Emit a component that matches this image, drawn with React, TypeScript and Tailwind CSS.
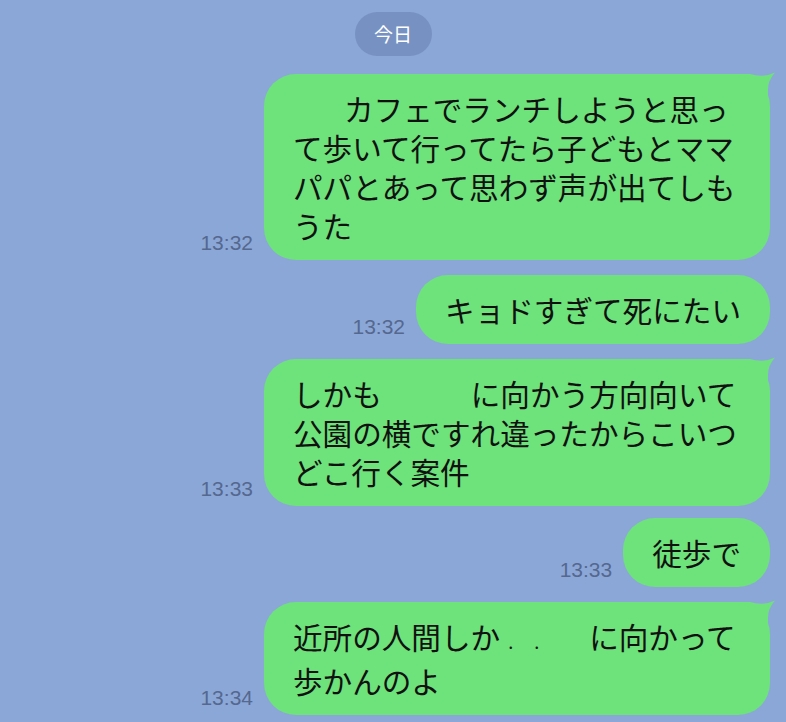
const messages = [
  {
    time: "13:32",
    tail: true,
    multi: true,
    mt: "mt-[18px]",
    lines: [
      <>
        <span className="inline-block w-[51px]" />
        カフェでランチしようと思っ
      </>,
      <>て歩いて行ってたら子どもとママ</>,
      <>パパとあって思わず声が出てしも</>,
      <>うた</>,
    ],
  },
  {
    time: "13:32",
    tail: false,
    multi: false,
    mt: "mt-[15px]",
    lines: [<>キョドすぎて死にたい</>],
  },
  {
    time: "13:33",
    tail: true,
    multi: true,
    mt: "mt-[15px]",
    lines: [
      <>
        しかも
        <span className="inline-block w-[89px]" />
        に向かう方向向いて
      </>,
      <>公園の横ですれ違ったからこいつ</>,
      <>どこ行く案件</>,
    ],
  },
  {
    time: "13:33",
    tail: false,
    multi: false,
    mt: "mt-[12px]",
    lines: [<>徒歩で</>],
  },
  {
    time: "13:34",
    tail: true,
    multi: true,
    mt: "mt-[15px]",
    lines: [
      <>
        近所の人間しか
        <span className="inline-block w-[89px] text-[18px] pl-[8px] tracking-[21px] align-baseline">
          ..
        </span>
        に向かって
      </>,
      <>歩かんのよ</>,
    ],
  },
];

function Tail() {
  return (
    <svg
      className="absolute right-[-8px] top-0 overflow-visible"
      width="40"
      height="40"
      viewBox="0 0 40 40"
    >
      <path d="M0,0 H12 Q26,4 37,-1.5 Q30,6 30,16 V40 H0 Z" fill="#6ee27b" />
    </svg>
  );
}

export default function App() {
  return (
    <div
      className="w-[786px] h-[722px] overflow-hidden bg-[#8ba7d8] pt-[12px]"
      style={{ fontFamily: '"Noto Sans CJK JP", "Noto Sans", sans-serif' }}
    >
      {/* date chip */}
      <div className="flex justify-center">
        <div className="h-[44px] w-[77px] rounded-full bg-[#7792c2] flex items-center justify-center text-white text-[19px]">
          今日
        </div>
      </div>

      <div className="pr-[16px]">
        {messages.map((m, idx) => (
          <div key={idx} className={`flex justify-end items-end gap-[11px] ${m.mt}`}>
            <div
              className="text-[21px] leading-none text-[#55688e] mb-[7px]"
              style={{ fontFamily: '"Liberation Sans", Arial, sans-serif' }}
            >
              {m.time}
            </div>
            <div
              className={`relative bg-[#6ee27b] rounded-[32px] px-[29px] py-[15px] text-[#111] text-[29.6px] leading-[39px] whitespace-nowrap ${
                m.multi ? "w-[506px]" : ""
              }`}
            >
              {m.tail && <Tail />}
              <div className="relative">
                {m.lines.map((l, i) => (
                  <div key={i}>{l}</div>
                ))}
              </div>
            </div>
          </div>
        ))}
      </div>
    </div>
  );
}
